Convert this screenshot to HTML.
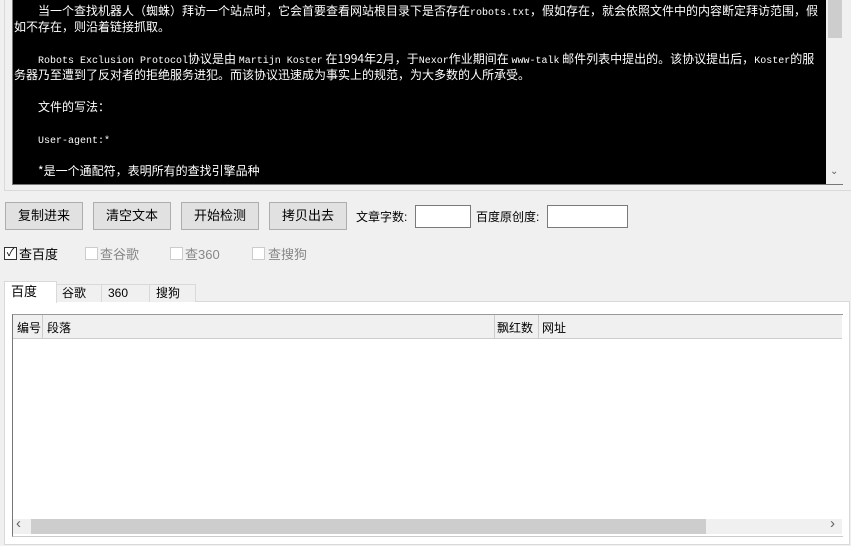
<!DOCTYPE html><html><head><meta charset="utf-8"><style>
body{margin:0;width:851px;height:546px;background:#f0f0f0;position:relative;overflow:hidden;font-family:"Liberation Sans","Noto Sans CJK SC",sans-serif;font-size:12px;color:#000}
.a{position:absolute}
.txt{left:12px;top:0;width:808px;padding-right:6px;padding-top:3px;height:181px;background:#000;color:#fff;font-family:"Noto Sans CJK SC",sans-serif;font-size:12px;line-height:16px;overflow:hidden;border-left:1px solid #777;border-bottom:1px solid #777}
.txt p{margin:0 0 16px 0;text-indent:24px;padding-left:1px;height:16px;overflow:visible}
.txt p.t{height:32px}
.m{font-family:"Liberation Mono",monospace;font-size:10px;line-height:10px}
.btn{top:202px;width:76px;height:26px;border:1px solid #adadad;background:#e1e1e1;text-align:center;line-height:26px;font-size:13px}
.inp{top:205px;height:21px;border:1px solid #7a7a7a;background:#fff}
.cb{top:247px;width:11px;height:11px;border:1px solid #ccc;background:#fff}
.cbl{top:244px;font-size:12px;color:#888}
.tab{top:284px;height:17px;border:1px solid #d9d9d9;border-bottom:none;background:#f0f0f0;font-size:12px;line-height:17px;padding-left:6px}
</style></head><body>
<div class="a" style="left:4px;top:0;width:846px;height:190px;border:1px solid #d9d9d9;border-top:none"></div>
<div class="a txt">
<p class="t">当一个查找机器人（蜘蛛）拜访一个站点时，它会首要查看网站根目录下是否存在<span class="m">robots.txt</span>，假如存在，就会依照文件中的内容断定拜访范围，假如不存在，则沿着链接抓取。</p>
<p class="t"><span class="m">Robots Exclusion Protocol</span>协议是由 <span class="m">Martijn Koster</span> 在1994年2月，于<span class="m">Nexor</span>作业期间在 <span class="m">www-talk</span> 邮件列表中提出的。该协议提出后，<span class="m">Koster</span>的服务器乃至遭到了反对者的拒绝服务进犯。而该协议迅速成为事实上的规范，为大多数的人所承受。</p>
<p>文件的写法：</p>
<p><span class="m">User-agent:*</span></p>
<p>*是一个通配符，表明所有的查找引擎品种</p>
</div>
<div class="a" style="left:826px;top:0;width:17px;height:184px;background:#f0f0f0;border-bottom:1px solid #777"><div class="a" style="left:2px;top:0;width:14px;height:38px;background:#cdcdcd"></div><div class="a" style="left:4px;top:166px;font-size:10px;color:#606060">&#8964;</div></div>
<div class="a btn" style="left:5px">复制进来</div>
<div class="a btn" style="left:93px">清空文本</div>
<div class="a btn" style="left:181px">开始检测</div>
<div class="a btn" style="left:269px">拷贝出去</div>
<div class="a" style="left:356px;top:208px;font-size:12px">文章字数:</div>
<div class="a inp" style="left:415px;width:54px"></div>
<div class="a" style="left:476px;top:208px;font-size:12px">百度原创度:</div>
<div class="a inp" style="left:547px;width:79px"></div>
<div class="a cb" style="left:4px;border-color:#333;font-size:11px;line-height:11px;text-align:center">✓</div><div class="a cbl" style="left:19px;color:#000;font-size:13px">查百度</div>
<div class="a cb" style="left:85px"></div><div class="a cbl" style="left:100px;font-size:13px">查谷歌</div>
<div class="a cb" style="left:170px"></div><div class="a cbl" style="left:185px;font-size:13px">查360</div>
<div class="a cb" style="left:252px"></div><div class="a cbl" style="left:268px;font-size:13px">查搜狗</div>
<div class="a" style="left:4px;top:301px;width:844px;height:242px;border:1px solid #d9d9d9;background:#fff"></div>
<div class="a tab" style="left:55px;width:40px">谷歌</div>
<div class="a tab" style="left:101px;width:41px">360</div>
<div class="a tab" style="left:149px;width:39px">搜狗</div>
<div class="a tab" style="left:4px;top:281px;width:45px;height:21px;background:#fff;border-color:#d9d9d9;font-size:13px;line-height:20px">百度</div>
<div class="a" style="left:12px;top:314px;width:830px;height:221px;border-left:1px solid #777;border-top:1px solid #999;border-bottom:1px solid #ccc;background:#fff"></div>
<div class="a" style="left:13px;top:315px;width:829px;height:23px;background:#f0f0f0;border-bottom:1px solid #ccc"></div>
<div class="a" style="left:42px;top:315px;width:1px;height:23px;background:#ccc"></div>
<div class="a" style="left:494px;top:315px;width:1px;height:23px;background:#ccc"></div>
<div class="a" style="left:538px;top:315px;width:1px;height:23px;background:#ccc"></div>
<div class="a" style="left:17px;top:319px">编号</div>
<div class="a" style="left:47px;top:319px">段落</div>
<div class="a" style="left:497px;top:319px">飘红数</div>
<div class="a" style="left:542px;top:319px">网址</div>
<div class="a" style="left:13px;top:519px;width:829px;height:15px;background:#f0f0f0"></div>
<div class="a" style="left:31px;top:519px;width:675px;height:15px;background:#cdcdcd"></div>
<div class="a" style="left:16px;top:515px;color:#606060;font-size:15px">‹</div>
<div class="a" style="left:830px;top:515px;color:#606060;font-size:15px">›</div>
</body></html>
